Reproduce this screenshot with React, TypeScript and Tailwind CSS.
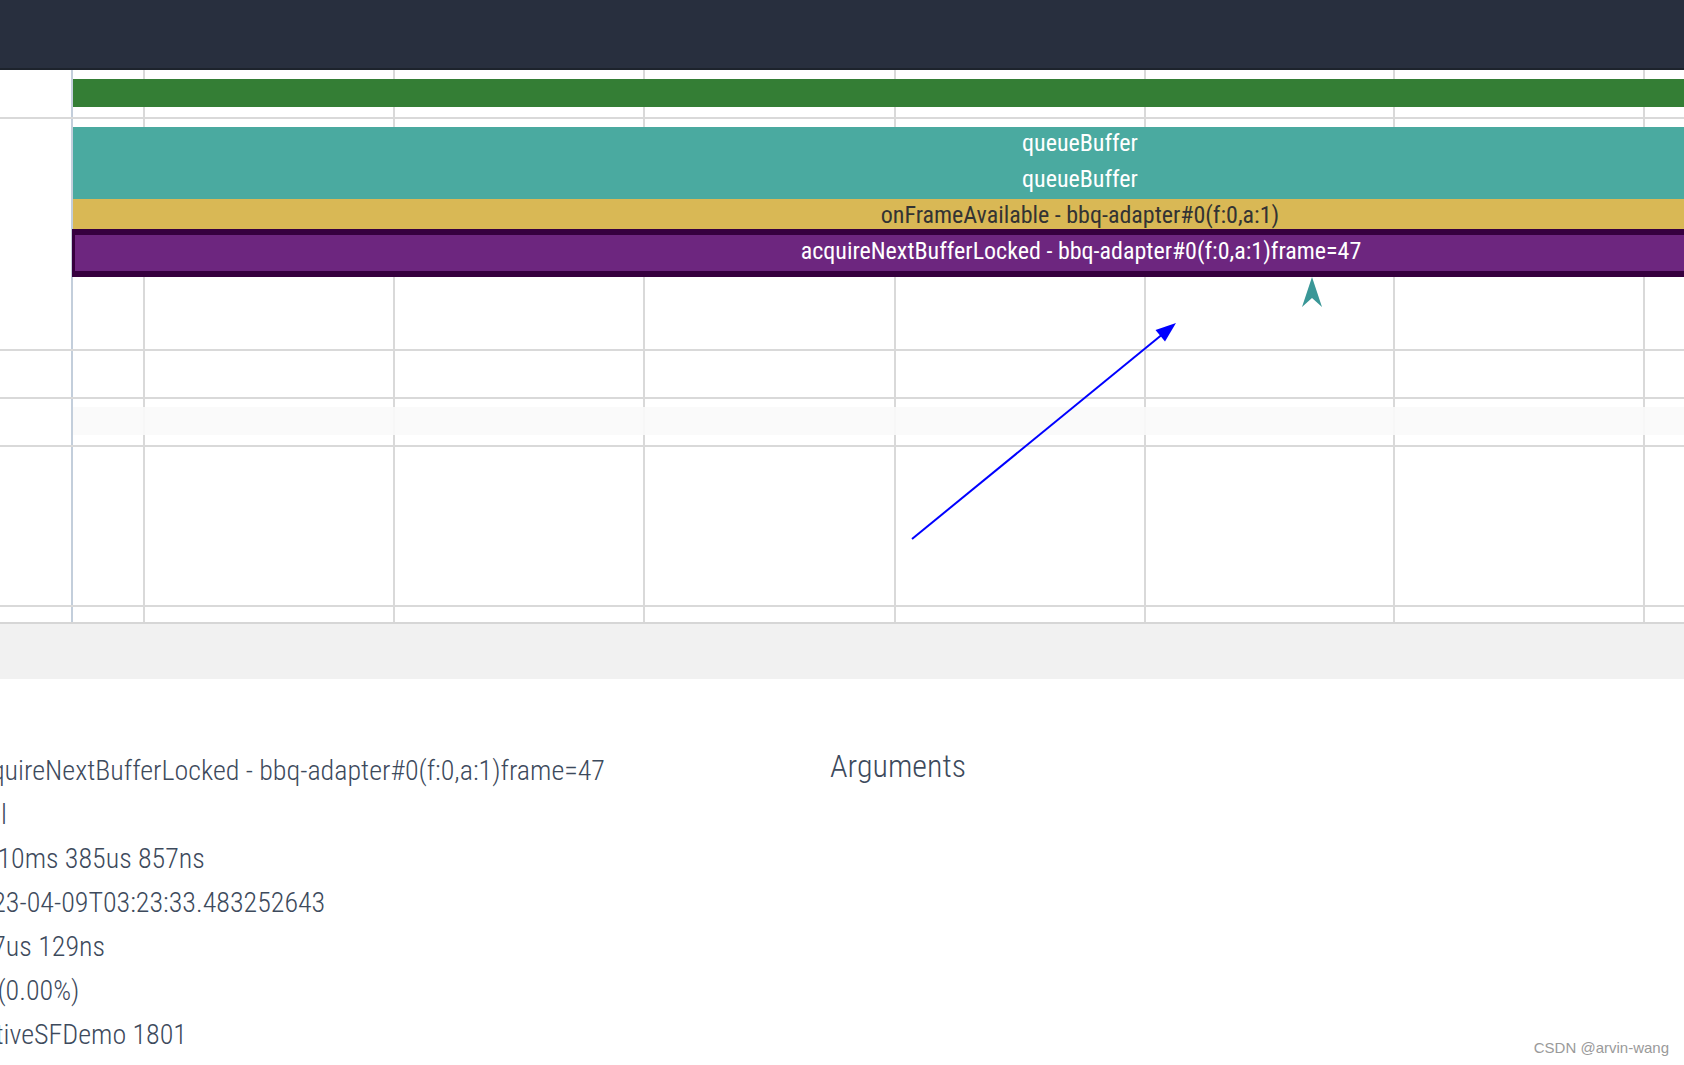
import React from "react";

const gridLines = [
  "left-[143px]",
  "left-[393px]",
  "left-[643px]",
  "left-[894px]",
  "left-[1144px]",
  "left-[1393px]",
  "left-[1643px]",
];

const details = [
  "acquireNextBufferLocked - bbq-adapter#0(f:0,a:1)frame=47",
  "null",
  "1s 10ms 385us 857ns",
  "2023-04-09T03:23:33.483252643",
  "107us 129ns",
  "0s (0.00%)",
  "NativeSFDemo 1801",
];

export default function App() {
  return (
    <div className="relative w-[1684px] h-[1065px] overflow-hidden bg-white font-['Roboto',sans-serif]">
      {/* top bar */}
      <div className="h-[70px] bg-[#282f3e] border-b-2 border-[#1d232c]" />

      {/* tracks panel */}
      <div className="relative h-[554px] border-b-2 border-[#d6d6d6] overflow-hidden">
        <div className="absolute top-0 bottom-0 left-[71px] w-[2px] bg-[#c3cedb]" />
        {gridLines.map((c) => (
          <div key={c} className={`absolute top-0 bottom-0 w-[2px] bg-[#d9d9d9] ${c}`} />
        ))}

        <div className="relative flex flex-col h-full">
          {/* track 1 */}
          <div className="h-[49px] shrink-0 border-b-2 border-[#d9d9d9] pt-[9px] pl-[73px]">
            <div className="h-[28px] w-[2014px] bg-[#347e35]" />
          </div>

          {/* track 2 */}
          <div className="h-[232px] shrink-0 border-b-2 border-[#d9d9d9] pt-[8px] pl-[73px]">
            <div className="w-[2014px] flex flex-col text-[24px] font-stretch-condensed">
              <div className="h-[36px] bg-[#4aaaa0] flex items-center justify-center text-white pb-[4px]">
                queueBuffer
              </div>
              <div className="h-[36px] bg-[#4aaaa0] flex items-center justify-center text-white pb-[4px]">
                queueBuffer
              </div>
              <div className="h-[30px] bg-[#d9b855] flex items-center justify-center text-[#333333] pt-[2px]">
                onFrameAvailable - bbq-adapter#0(f:0,a:1)
              </div>
              <div className="h-[48px] -ml-[1px] bg-[#6d267f] border-y-[6px] border-l-[3px] border-[#36003f] flex items-center justify-center text-white pb-[4px]">
                acquireNextBufferLocked - bbq-adapter#0(f:0,a:1)frame=47
              </div>
            </div>
          </div>

          {/* track 3 */}
          <div className="h-[48px] shrink-0 border-b-2 border-[#d9d9d9]" />

          {/* track 4 */}
          <div className="h-[48px] shrink-0 border-b-2 border-[#d9d9d9] pt-[8px] pl-[73px]">
            <div className="h-[28px] w-full bg-[#fafafa]/90" />
          </div>

          {/* track 5 */}
          <div className="h-[160px] shrink-0 border-b-2 border-[#d9d9d9]" />

          {/* track 6 */}
          <div className="flex-1" />
        </div>
      </div>

      {/* gray strip */}
      <div className="h-[55px] bg-[#f1f1f1]" />

      {/* details */}
      <div className="flex pt-[70px] text-[#3d4a5c]">
        <div className="w-[830px] shrink-0">
          <div className="-ml-[35px] flex flex-col text-[28px] leading-[44px] font-light font-stretch-condensed whitespace-nowrap">
            {details.map((d, i) => (
              <div key={i} className={i === 1 ? "pl-[3px]" : ""}>
                {d}
              </div>
            ))}
          </div>
        </div>
        <div className="text-[32px] leading-[44px] font-light font-stretch-condensed -mt-[5px]">
          Arguments
        </div>
      </div>

      {/* annotations */}
      <svg
        className="absolute inset-0 pointer-events-none"
        width="1684"
        height="1065"
        viewBox="0 0 1684 1065"
      >
        <polygon points="1312,277 1322,307 1312,298 1302,307" fill="#3a9797" />
        <line x1="912" y1="539" x2="1164" y2="333" stroke="#0000ff" strokeWidth="2" />
        <polygon points="1176,323 1165,341.5 1155.5,330" fill="#0000ff" />
      </svg>

      {/* watermark */}
      <div className="absolute right-[15px] bottom-[9px] text-[15px] leading-[17px] text-[#9a9a9a] font-['Liberation_Sans',sans-serif]">
        CSDN @arvin-wang
      </div>
    </div>
  );
}
